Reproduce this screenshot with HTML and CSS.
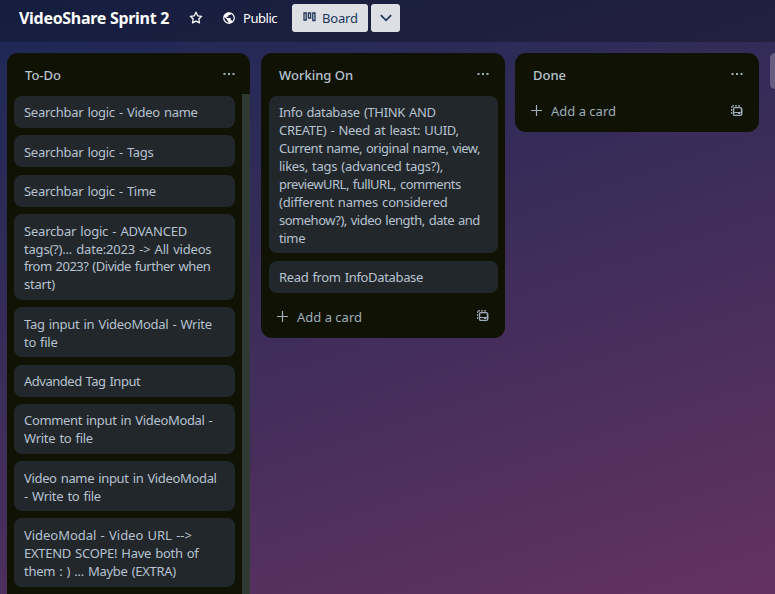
FILE: index.html
```html
<!DOCTYPE html>
<html lang="en">
<head>
<meta charset="utf-8">
<title>VideoShare Sprint 2</title>
<link rel="stylesheet" href="styles.css">
</head>
<body>
<svg class="defs" width="0" height="0">
  <symbol id="dots" viewBox="0 0 12 4"><path d="M.5 1h2v2h-2zM5 1h2v2H5zM9.500 1h2v2h-2z" fill="currentColor"/></symbol>
  <symbol id="plus" viewBox="0 0 12 12"><path d="M5.500 0v11M0 5.500h11" stroke="currentColor" stroke-width="1.200" fill="none"/></symbol>
  <symbol id="template" viewBox="0 0 12 12"><path d="M.7 9V1.200M1 .8h9" stroke="currentColor" stroke-width="1.200" stroke-dasharray="2 1" fill="none"/><rect x="2.600" y="2.600" width="7.800" height="7.800" rx="1" stroke="currentColor" stroke-width="1.300" fill="none"/><path d="M3 7h7v1H3zM7 8h2v1H7z" fill="currentColor"/><path d="M10.500 3.500h1.200v6h-1.200z" fill="currentColor" opacity=".6"/></symbol>
</svg>
<header class="topbar">
  <h1 class="title">VideoShare Sprint 2</h1>
  <svg class="star" viewBox="0 0 14 14"><path d="M7 1.300l1.700 3.500 3.900.5-2.800 2.700.7 3.900L7 10.100l-3.500 1.800.7-3.900L1.400 5.300l3.900-.5z" fill="none" stroke="currentColor" stroke-width="1.300" stroke-linejoin="round"/></svg>
  <svg class="globe" viewBox="0 0 24 24"><path fill="currentColor" d="M12 2C6.480 2 2 6.480 2 12s4.480 10 10 10 10-4.480 10-10S17.520 2 12 2zm-1 17.930C7.050 19.440 4 16.080 4 12c0-.62.080-1.210.21-1.790L9 15v1c0 1.100.9 2 2 2v1.930zm6.900-2.540c-.26-.81-1-1.390-1.900-1.390h-1v-3c0-.55-.45-1-1-1H8v-2h2c.55 0 1-.45 1-1V7h2c1.100 0 2-.9 2-2v-.41c2.930 1.190 5 4.060 5 7.410 0 2.080-.8 3.970-2.100 5.390z"/></svg>
  <span class="public">Public</span>
  <div class="view"><svg class="boardicon" viewBox="0 0 13 10"><path d="M1 1h2.200v7H1zM5.400 1h2.200v5H5.400zM9.800 1H12v7.500H9.800z" fill="none" stroke="currentColor" stroke-width="1.300"/></svg><span>Board</span></div>
  <div class="more"><svg viewBox="0 0 12 8"><path d="M.8 1.200L6 6.400l5.200-5.200" fill="none" stroke="currentColor" stroke-width="1.700"/></svg></div>
</header>
<main class="board">
  <section class="list todo">
    <header class="head"><h2>To-Do</h2><svg class="dots"><use href="#dots"/></svg></header>
    <div class="cards">
      <article class="card">Searchbar logic - Video name</article>
      <article class="card low">Searchbar logic - Tags</article>
      <article class="card">Searchbar logic - Time</article>
      <article class="card fourline"><span class="loose">Searcbar logic - ADVANCED</span><br><span class="loose">tags(?)... date:2023 -&gt; All videos</span><br><span class="tighter">from 2023? (Divide further when</span><br><span class="loose">start)</span></article>
      <article class="card low">Tag input in VideoModal - Write<br>to file</article>
      <article class="card"><span class="tighter">Advanded Tag Input</span></article>
      <article class="card"><span class="tight">Comment input in VideoModal -</span><br>Write to file</article>
      <article class="card low"><span class="tight">Video name input in VideoModal</span><br>- Write to file</article>
      <article class="card last"><span class="wide">VideoModal - Video URL --&gt;</span><br>EXTEND SCOPE! Have both of<br>them : ) ... Maybe (EXTRA)</article>
    </div>
    <div class="scroll"></div>
  </section>
  <section class="list">
    <header class="head"><h2>Working On</h2><svg class="dots"><use href="#dots"/></svg></header>
    <div class="cards">
      <article class="card long"><span class="tight">Info database (THINK AND</span><br>CREATE) - Need at least: UUID,<br><span class="tighter">Current name, original name, view,</span><br>likes, tags (advanced tags?),<br><span class="tighter">previewURL, fullURL, comments</span><br><span class="loose">(different names considered</span><br><span class="tighter">somehow?), video length, date and</span><br><span class="tight">time</span></article>
      <article class="card tight">Read from InfoDatabase</article>
    </div>
    <footer class="add"><svg class="plus"><use href="#plus"/></svg><span>Add a card</span><svg class="template"><use href="#template"/></svg></footer>
  </section>
  <section class="list done">
    <header class="head"><h2>Done</h2><svg class="dots"><use href="#dots"/></svg></header>
    <footer class="add"><svg class="plus"><use href="#plus"/></svg><span>Add a card</span><svg class="template"><use href="#template"/></svg></footer>
  </section>
  <div class="next"></div>
</main>
</body>
</html>
```
FILE: styles.css
```css
* { box-sizing: border-box; }
body {
  margin: 0;
  width: 775px;
  height: 594px;
  overflow: hidden;
  background: linear-gradient(162deg, #1b2855 0%, #3e2d5a 50%, #643262 100%);
  font: 13px/18px "Noto Sans", "Open Sans", sans-serif;
  color: #b6c2cf;
  white-space: nowrap;
}
svg { display: block; flex: none; }
.defs { position: absolute; }
.topbar {
  height: 42px;
  padding: 3px 0 9px 19px;
  display: flex;
  align-items: center;
  background: rgba(12, 14, 30, .4);
  color: #fff;
}
.title { margin: 0; width: 170px; font-size: 16px; line-height: 24px; font-weight: 700; letter-spacing: -.3px; }
.star { width: 14px; height: 14px; }
.globe { width: 14px; height: 14px; margin: 0 0 1px 19px; }
.public { margin-left: 7px; width: 49px; letter-spacing: -.45px; }
.view, .more {
  height: 28px;
  border-radius: 3px;
  background: #dcdfe4;
  color: #22375b;
  display: flex;
  align-items: center;
}
.view { width: 76px; padding-left: 11px; letter-spacing: -.2px; }
.boardicon { width: 13px; height: 10px; margin: 0 6px 3px 0; }
.more { width: 29px; margin-left: 3px; justify-content: center; }
.more svg { width: 12px; height: 8px; }
.board { height: 552px; padding: 11px 0 0 7px; display: flex; align-items: flex-start; gap: 11px; }
.list { width: 244px; flex: none; border-radius: 11px; background: #101204; padding: 0 7px 0 8px; }
.todo {
  width: 243px;
  height: 541px;
  border-radius: 11px 11px 0 0;
  padding: 0 0 0 7px;
  display: grid;
  grid-template-columns: 221px 8px;
  column-gap: 7px;
  grid-template-rows: 41px 500px;
}
.head { height: 43px; padding: 0 9px 0 10px; display: flex; align-items: center; justify-content: space-between; }
.todo .head { grid-column: 1 / 3; height: 41px; padding: 2px 15px 0 11px; }
.head h2 { margin: 0; font-size: 13px; font-weight: 500; line-height: 18px; }
.dots { width: 12px; height: 4px; margin-bottom: 1px; color: #9fadbc; }
.cards { display: flex; flex-direction: column; gap: 7.500px; }
.todo .cards { padding-top: 2px; }
.card {
  border-radius: 8px;
  background: #22272b;
  padding: 8px 10px 6px;
  line-height: 17.900px;
  flex: none;
  letter-spacing: -.28px;
  word-spacing: 1px;
}
.low { padding: 8.600px 10px 5.400px; }
.fourline { line-height: 17.700px; padding: 8.700px 10px 6.100px; }
.last { line-height: 18px; margin-top: -.6px; padding: 7.800px 10px 6.700px; }
.long { line-height: 18px; padding: 7.400px 10px 6px; }
.loose { letter-spacing: -.2px; }
.wide { letter-spacing: -.04px; }
.tight { letter-spacing: -.34px; }
.tighter { letter-spacing: -.49px; }
.scroll { background: #303a34; width: 8px; }
.add { height: 45px; padding: 3px 9px 0 8px; display: flex; align-items: center; color: #9fadbc; }
.plus { width: 12px; height: 12px; margin: 0 8px 0 0; }
.template { width: 12px; height: 12px; margin: 0 0 1px auto; }
.done { height: 79px; margin-left: -1px; }
.done .add { height: 30px; padding-top: 0; }
.next { flex: 1; height: 36px; border-radius: 11px 0 0 11px; background: rgba(255, 255, 255, .24); }
```
